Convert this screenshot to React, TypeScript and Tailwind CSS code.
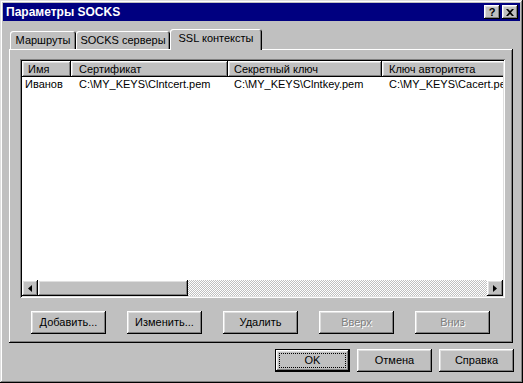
import React from "react";

const raised =
  "bg-[#c0c0c0] shadow-[inset_-1px_-1px_#000,inset_1px_1px_#fff,inset_-2px_-2px_#808080,inset_2px_2px_#dfdfdf]";

const Btn = ({ label, disabled, className = "" }: { label: string; disabled?: boolean; className?: string }) => (
  <div className={`h-[23px] w-[75px] flex items-center justify-center ${raised} ${className}`}>
    <span className={disabled ? "text-[#808080] [text-shadow:1px_1px_#fff]" : "text-black"}>{label}</span>
  </div>
);

const Arrow = ({ dir }: { dir: "left" | "right" }) => (
  <div className={`w-[16px] h-[16px] flex items-center justify-center ${raised}`}>
    <svg width="4" height="7" viewBox="0 0 4 7">
      {dir === "left" ? <path d="M4 0 L0 3.5 L4 7 Z" fill="#000" /> : <path d="M0 0 L4 3.5 L0 7 Z" fill="#000" />}
    </svg>
  </div>
);

const cols = [
  { title: "Имя", w: "w-[49px]", hp: "pl-[6px]", rp: "pl-[3px]" },
  { title: "Сертификат", w: "w-[157px]", hp: "pl-[8px]", rp: "pl-[8px]" },
  { title: "Секретный ключ", w: "w-[154px]", hp: "pl-[6px]", rp: "pl-[6px]" },
  { title: "Ключ авторитета", w: "w-[140px]", hp: "pl-[7px]", rp: "pl-[7px]" },
];

const row = ["Иванов", "C:\\MY_KEYS\\Clntcert.pem", "C:\\MY_KEYS\\Clntkey.pem", "C:\\MY_KEYS\\Cacert.pem"];

export default function App() {
  return (
    <div
      className="w-[523px] h-[383px] bg-[#c0c0c0] p-[3px] flex flex-col text-[11px] leading-none text-black shadow-[inset_-1px_-1px_#000,inset_1px_1px_#dfdfdf,inset_-2px_-2px_#808080,inset_2px_2px_#fff]"
      style={{ fontFamily: '"Liberation Sans", Arial, sans-serif' }}
    >
      {/* title bar */}
      <div className="h-[18px] bg-[#000080] flex items-center justify-between pl-[3px] pr-[2px]">
        <span className="text-white font-bold text-[12px]">Параметры SOCKS</span>
        <div className="flex gap-[2px]">
          <div className={`w-[16px] h-[14px] flex items-center justify-center font-bold text-[11px] ${raised}`}>?</div>
          <div className={`w-[16px] h-[14px] flex items-center justify-center ${raised}`}>
            <svg width="8" height="7" viewBox="0 0 8 7">
              <path d="M0 0 L2 0 L4 2 L6 0 L8 0 L5 3.5 L8 7 L6 7 L4 5 L2 7 L0 7 L3 3.5 Z" fill="#000" />
            </svg>
          </div>
        </div>
      </div>

      <div className="flex flex-col px-[6px] pt-[8px]">
        {/* tabs */}
        <div className="flex items-end h-[20px] pl-[1px]">
          <div className="w-[66px] h-[18px] flex items-center justify-center rounded-t-[3px] shadow-[inset_1px_1px_#fff,inset_-1px_0_#000,inset_-2px_0_#808080]">
            Маршруты
          </div>
          <div className="w-[94px] h-[18px] flex items-center justify-center rounded-t-[3px] shadow-[inset_1px_1px_#fff,inset_-1px_0_#000,inset_-2px_0_#808080]">
            SOCKS серверы
          </div>
          <div className="w-[92px] h-[21px] -mb-[1px] pb-[2px] z-10 bg-[#c0c0c0] flex items-center justify-center rounded-t-[3px] shadow-[inset_1px_1px_#fff,inset_-1px_0_#000,inset_-2px_0_#808080]">
            SSL контексты
          </div>
        </div>

        {/* tab panel */}
        <div className="h-[294px] w-[504px] flex flex-col pl-[11px] pt-[10px] shadow-[inset_-1px_-1px_#000,inset_1px_1px_#fff,inset_-2px_-2px_#808080]">
          {/* list view */}
          <div className="w-[485px] h-[239px] p-[2px] bg-white flex flex-col shadow-[inset_1px_1px_#808080,inset_-1px_-1px_#fff,inset_2px_2px_#000,inset_-2px_-2px_#dfdfdf]">
            <div className="flex-1 overflow-hidden flex flex-col">
              <div className="flex h-[16px] shrink-0">
                {cols.map((c) => (
                  <div key={c.title} className={`${c.w} ${c.hp} shrink-0 h-full flex items-center ${raised}`}>
                    {c.title}
                  </div>
                ))}
              </div>
              <div className="flex h-[15px] items-center">
                {row.map((t, i) => (
                  <div key={i} className={`${cols[i].w} ${cols[i].rp} shrink-0 whitespace-nowrap overflow-hidden`}>
                    {t}
                  </div>
                ))}
              </div>
            </div>
            {/* horizontal scrollbar */}
            <div className="h-[16px] flex shrink-0">
              <Arrow dir="left" />
              <div className={`w-[150px] h-full ${raised}`} />
              <div className="flex-1 h-full bg-[repeating-conic-gradient(#c0c0c0_0%_25%,#fff_0%_50%)] bg-[length:2px_2px]" />
              <Arrow dir="right" />
            </div>
          </div>

          {/* list buttons */}
          <div className="flex gap-[21px] mt-[13px] pl-[11px]">
            <Btn label="Добавить..." />
            <Btn label="Изменить..." />
            <Btn label="Удалить" />
            <Btn label="Вверх" disabled />
            <Btn label="Вниз" disabled />
          </div>
        </div>

        {/* dialog buttons */}
        <div className="flex justify-end gap-[7px] mt-[6px]">
          <div className="h-[23px] w-[75px] border border-black flex">
            <div className={`flex-1 flex items-center justify-center p-[3px] ${raised}`}>
              <div className="w-full h-full border border-dotted border-black flex items-center justify-center">OK</div>
            </div>
          </div>
          <Btn label="Отмена" />
          <Btn label="Справка" />
        </div>
      </div>
    </div>
  );
}
